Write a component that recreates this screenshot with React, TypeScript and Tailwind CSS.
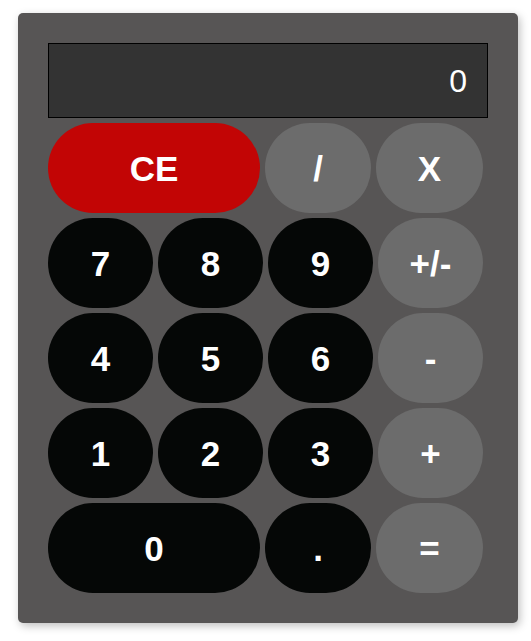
import React from "react";

const base =
  "h-[90px] rounded-full flex items-center justify-center text-white font-bold text-[35px] leading-none";
const black = "bg-[#050706]";
const gray = "bg-[#6c6c6c]";
const red = "bg-[#c20505]";

function Btn({ label, cls, w }: { label: string; cls: string; w?: string }) {
  return <div className={`${base} ${cls} ${w ?? ""}`}>{label}</div>;
}

export default function App() {
  const mid: [string, string][][] = [
    [["7", black], ["8", black], ["9", black], ["+/-", gray]],
    [["4", black], ["5", black], ["6", black], ["-", gray]],
    [["1", black], ["2", black], ["3", black], ["+", gray]],
  ];
  return (
    <div
      className="w-[531px] h-[641px] bg-white pt-[13px] pl-[18px]"
      style={{ fontFamily: '"Liberation Sans", Arial, sans-serif' }}
    >
      <div className="w-[500px] h-[610px] bg-[#575555] rounded-[5px] shadow-[2px_3px_8px_rgba(0,0,0,0.25)] p-[30px] flex flex-col gap-[5px]">
        <div className="w-[440px] h-[75px] bg-[#333333] border border-black flex items-center justify-end pr-[20px] text-white text-[32px] leading-none">
          0
        </div>
        <div className="flex flex-col gap-[5px] w-[435px]">
          <div className="flex gap-[5px]">
            <Btn label="CE" cls={red} w="w-[212px]" />
            <Btn label="/" cls={gray} w="w-[106px]" />
            <Btn label="X" cls={gray} w="w-[107px]" />
          </div>
          {mid.map((row, i) => (
            <div key={i} className="grid grid-cols-[105px_105px_105px_105px] gap-[5px]">
              {row.map(([l, c]) => (
                <Btn key={l} label={l} cls={c} />
              ))}
            </div>
          ))}
          <div className="flex gap-[5px]">
            <Btn label="0" cls={black} w="w-[212px]" />
            <Btn label="." cls={black} w="w-[106px]" />
            <Btn label="=" cls={gray} w="w-[107px]" />
          </div>
        </div>
      </div>
    </div>
  );
}
